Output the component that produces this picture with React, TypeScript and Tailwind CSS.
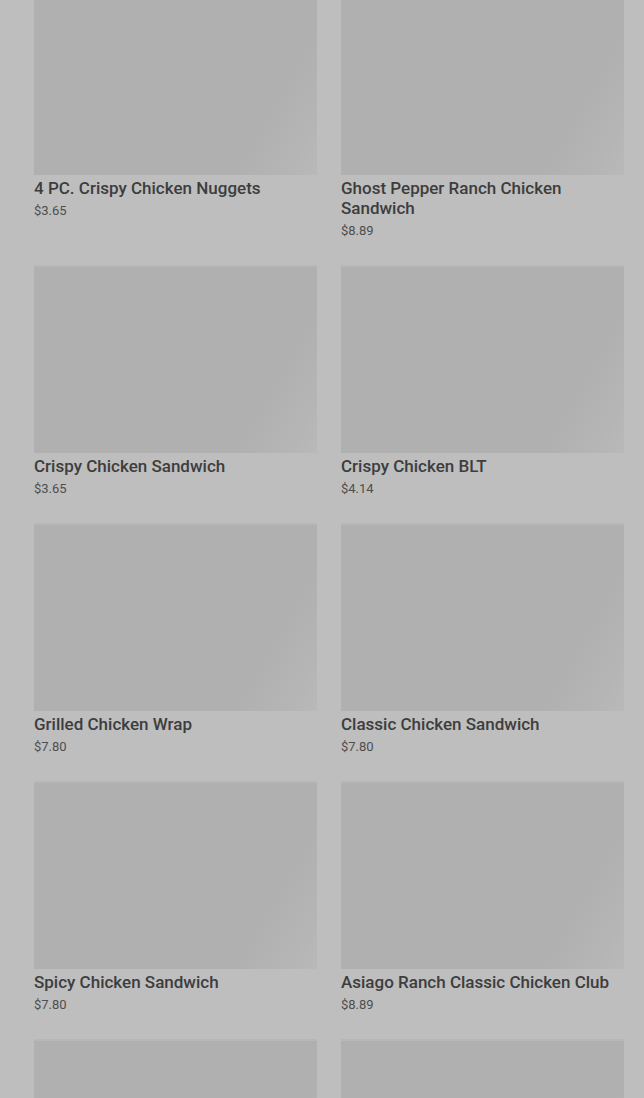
const items = [
  { name: "4 PC. Crispy Chicken Nuggets", price: "$3.65" },
  { name: "Ghost Pepper Ranch Chicken Sandwich", price: "$8.89" },
  { name: "Crispy Chicken Sandwich", price: "$3.65" },
  { name: "Crispy Chicken BLT", price: "$4.14" },
  { name: "Grilled Chicken Wrap", price: "$7.80" },
  { name: "Classic Chicken Sandwich", price: "$7.80" },
  { name: "Spicy Chicken Sandwich", price: "$7.80" },
  { name: "Asiago Ranch Classic Chicken Club", price: "$8.89" },
];

function Photo() {
  return (
    <div className="h-[188px] w-full border-t-[2px] border-[#b7b7b7] bg-[linear-gradient(120deg,#b0b0b0_0%,#b0b0b0_78%,#b5b5b5_92%,#b9b9b9_100%)]" />
  );
}

function ItemCard({ name, price }: { name: string; price: string }) {
  return (
    <div className="flex flex-col">
      <Photo />
      <div className="mt-[3px] text-[17px] leading-5 font-medium text-[#3d3d3d]">{name}</div>
      <div className="mt-[3px] text-[13px] leading-5 text-[#4e4e4e]">{price}</div>
    </div>
  );
}

export default function App() {
  return (
    <div
      className="h-[1098px] w-[644px] overflow-hidden bg-[#bebebe]"
      style={{ fontFamily: "Roboto, 'Liberation Sans', sans-serif" }}
    >
      <div className="-mt-[13px] grid grid-cols-2 gap-x-6 gap-y-6 pl-[34px] pr-5">
        {items.map((it) => (
          <ItemCard key={it.name} name={it.name} price={it.price} />
        ))}
        {/* next row, only the photos are in view */}
        <Photo />
        <Photo />
      </div>
    </div>
  );
}
